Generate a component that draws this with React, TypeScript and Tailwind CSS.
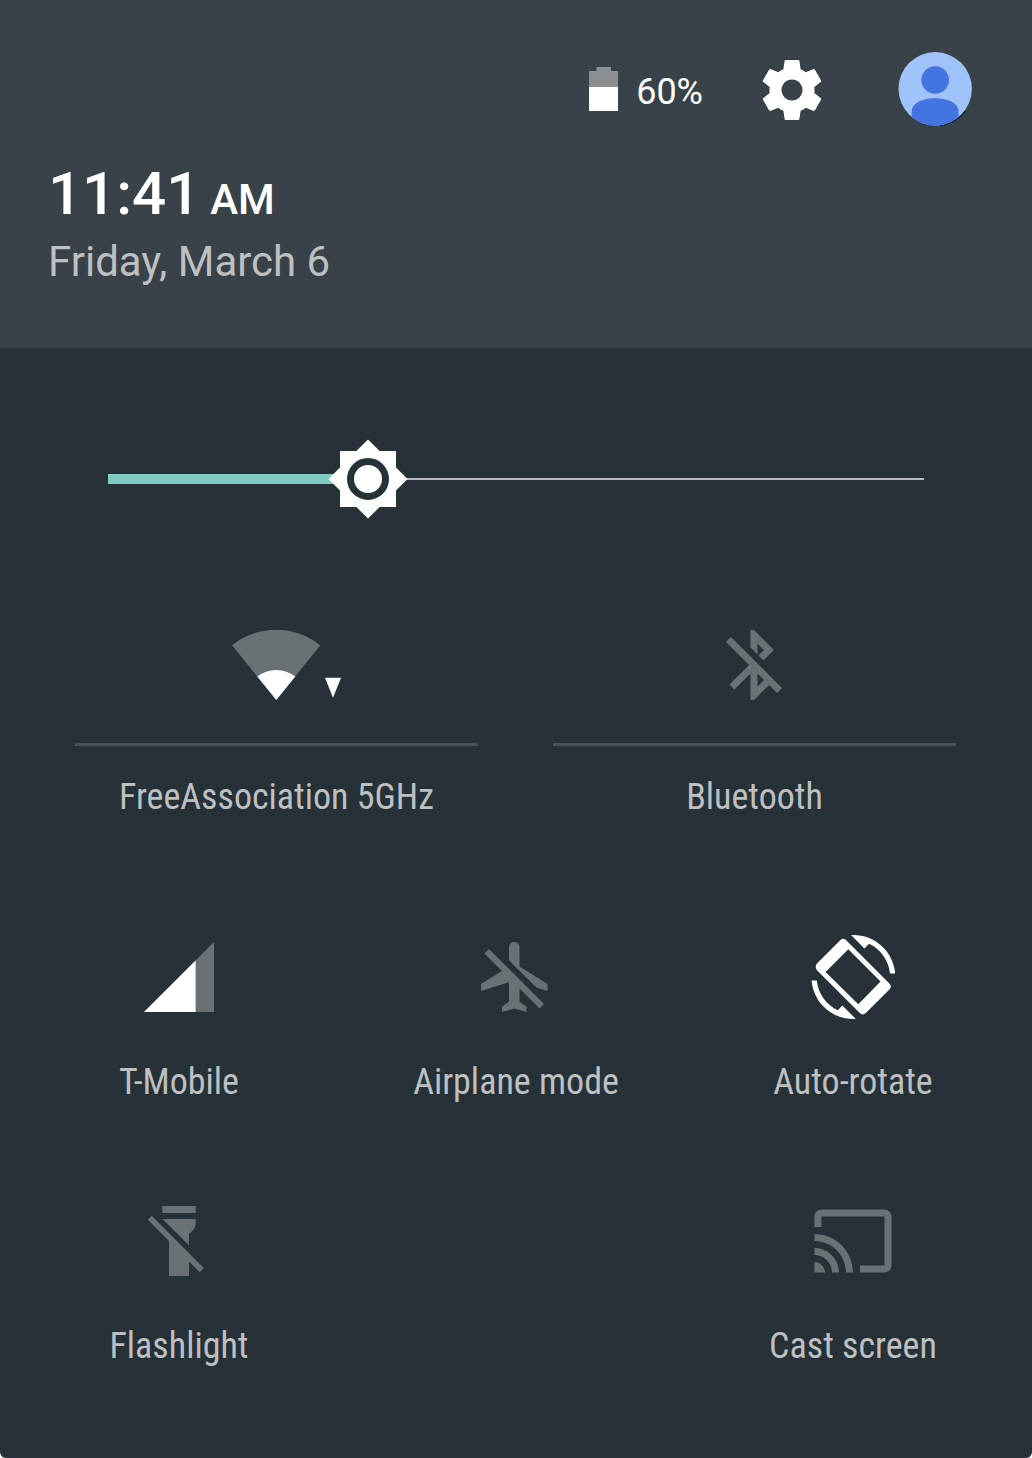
import type { ReactNode } from "react";

const AIRPLANE =
  "M13 9V3.5c0-.83-.67-1.5-1.5-1.5S10 2.67 10 3.5v3.68l7.83 7.83L21 16v-2l-8-5zM3 5.27l4.99 4.99L2 14v2l8-2.5V19l-2 1.5V22l3.5-1 3.5 1v-1.5L13 19v-3.73L18.73 21 20 19.73 4.27 4 3 5.27z";
const BLUETOOTH =
  "M13 5.83l1.88 1.88-1.6 1.6 1.41 1.41 3.02-3.02L12 2h-1v5.03l2 2v-3.2zM5.41 4L4 5.41 10.59 12 5 17.59 6.41 19 11 14.41V22h1l4.29-4.29 2.3 2.29L20 18.59 5.41 4zM13 18.17v-3.76l1.88 1.88L13 18.17z";
const CAST =
  "M21 3H3c-1.1 0-2 .9-2 2v3h2V5h18v14h-7v2h7c1.1 0 2-.9 2-2V5c0-1.1-.9-2-2-2zM1 18v3h3c0-1.66-1.34-3-3-3zm0-4v2c2.76 0 5 2.24 5 5h2c0-3.87-3.13-7-7-7zm0-4v2c4.97 0 9 4.03 9 9h2c0-6.08-4.93-11-11-11z";
const ROTATE_ARROWS =
  "M16.48 2.52c3.27 1.55 5.61 4.72 5.97 8.48h1.5C23.44 4.84 18.29 0 12 0l-.66.03 3.81 3.81 1.33-1.32zM7.52 21.48C4.25 19.94 1.91 16.76 1.55 13H.05C.56 19.16 5.71 24 12 24l.66-.03-3.81-3.81-1.33 1.32z";
const GEAR =
  "M19.43 12.98c.04-.32.07-.64.07-.98s-.03-.66-.07-.98l2.11-1.65c.19-.15.24-.42.12-.64l-2-3.46c-.12-.22-.39-.3-.61-.22l-2.49 1c-.52-.4-1.08-.73-1.69-.98l-.38-2.65C14.46 2.18 14.25 2 14 2h-4c-.25 0-.46.18-.49.42l-.38 2.65c-.61.25-1.17.59-1.69.98l-2.49-1c-.23-.09-.49 0-.61.22l-2 3.46c-.13.22-.07.49.12.64l2.11 1.65c-.04.32-.07.65-.07.98s.03.66.07.98l-2.11 1.65c-.19.15-.24.42-.12.64l2 3.46c.12.22.39.3.61.22l2.49-1c.52.4 1.08.73 1.69.98l.38 2.65c.03.24.24.42.49.42h4c.25 0 .46-.18.49-.42l.38-2.65c.61-.25 1.17-.59 1.69-.98l2.49 1c.23.09.49 0 .61-.22l2-3.46c.12-.22.07-.49-.12-.64l-2.11-1.65zM12 15.5c-1.93 0-3.5-1.57-3.5-3.5s1.57-3.5 3.5-3.5 3.5 1.57 3.5 3.5-1.57 3.5-3.5 3.5z";

function MaterialIcon({ d }: { d: string }) {
  return (
    <svg viewBox="0 0 24 24" className="size-[84px] fill-[#697174]">
      <path d={d} />
    </svg>
  );
}

function WifiIcon() {
  return (
    <svg viewBox="0 0 132 84" className="h-[84px] w-[132px]">
      <path d="M66.3 77L22 22.3A70.3 70.3 0 0 1 110.3 22.3Z" className="fill-[#697174]" />
      <path d="M66.3 77L47.3 53.6A30.3 30.3 0 0 1 85.3 53.6Z" className="fill-white" />
      <path d="M115 54.7H131L123 74.8Z" className="fill-white" />
    </svg>
  );
}

function SignalIcon() {
  return (
    <svg viewBox="0 0 84 84" className="size-[84px]">
      <path d="M7 77L77 7V77Z" className="fill-[#697174]" />
      <path d="M7 77L58.6 25.4V77Z" className="fill-white" />
    </svg>
  );
}

function RotateIcon() {
  return (
    <svg viewBox="0 0 84 84" className="size-[84px] fill-white">
      <path transform="translate(.4 0) scale(3.5)" d={ROTATE_ARROWS} />
      <path
        fillRule="evenodd"
        d="M29.2 5.2Q32.2 2.4 35.2 5.2L78.4 48.4Q81.2 51.4 78.4 54.4L54.8 78Q51.8 80.8 48.8 78L6 35.2Q3.4 32 6 28.4ZM37.3 14.3L14.6 37L47.3 69.2L69.5 46.5Z"
      />
    </svg>
  );
}

function FlashlightIcon() {
  return (
    <svg viewBox="0 0 84 84" className="size-[84px] fill-[#697174]">
      <path d="M25.3 7H58.8V14H25.3ZM25.5 20H58.8V23.5C58.8 28 56 32.5 52 34.5V46.2ZM14.7 16.7L10.8 20.7L32 42V77H52V62.5L62.7 73.2L66.8 69.1Z" />
    </svg>
  );
}

function BrightnessThumb() {
  return (
    <svg viewBox="0 0 80 80" className="absolute left-[220px] top-1/2 size-20 -translate-y-1/2">
      <path d="M12 12H28.4L40 .5L51.6 12H68V28.4L79.5 40L68 51.6V68H51.6L40 79.5L28.4 68H12V51.6L.5 40L12 28.4Z" className="fill-white" />
      <circle cx="40" cy="40" r="17.5" strokeWidth="7" className="fill-white stroke-[#263238]" />
    </svg>
  );
}

function Avatar() {
  return (
    <svg viewBox="0 0 74 74" className="size-[74px]">
      <clipPath id="avatar-clip">
        <circle cx="37.2" cy="36.8" r="36.7" />
      </clipPath>
      <path d="M67 59A37 37 0 0 1 42 73.4" fill="none" className="stroke-[#14181c]" strokeWidth="1.4" />
      <g clipPath="url(#avatar-clip)">
        <rect width="74" height="74" className="fill-[#a1c3fb]" />
        <circle cx="37.2" cy="28" r="13.8" className="fill-[#4374e0]" />
        <path d="M13.7 74V60C13.7 51 24 46.2 37.2 46.2S60.6 51 60.6 60V74Z" className="fill-[#4374e0]" />
      </g>
    </svg>
  );
}

function Label({ children }: { children: ReactNode }) {
  return (
    <span className="whitespace-nowrap text-[36px] leading-[42px] text-[#bdbfc1] [font-family:'Roboto_Condensed',Roboto,sans-serif] [font-stretch:75%]">
      {children}
    </span>
  );
}

function Tile({ icon, label }: { icon?: ReactNode; label?: string }) {
  return (
    <div className="flex w-[337px] flex-col items-center gap-[42px]">
      {icon}
      {label && <Label>{label}</Label>}
    </div>
  );
}

function WideTile({ icon, label }: { icon: ReactNode; label: string }) {
  return (
    <div className="flex w-[403px] flex-col items-center">
      <div className="pr-[2px]">{icon}</div>
      <div className="mt-9 h-[3px] w-full bg-[#475358]" />
      <div className="mt-[30px] flex">
        <Label>{label}</Label>
      </div>
    </div>
  );
}

export default function App() {
  return (
    <div className="h-[1458px] w-[1032px] bg-white font-[Roboto,sans-serif]">
      <div className="flex h-full flex-col overflow-hidden rounded-b-[6px] bg-[#263238]">
        <header className="h-[348px] bg-[#394249] pt-[51px] text-white">
          <div className="flex h-[76px] items-center justify-end pr-[60px]">
            <svg viewBox="0 0 29 44" className="mr-[18px] h-11 w-[29px]">
              <path d="M7.5 0H22V4H29V20H0V4H7.5Z" className="fill-[#8b8f92]" />
              <path d="M0 20H29V44H0Z" className="fill-white" />
            </svg>
            <span className="mr-[53px] mt-1.5 text-[36px] leading-[42px]">60%</span>
            <svg viewBox="0 0 24 24" className="mt-0.5 size-[72px] fill-white">
              <path d={GEAR} />
            </svg>
            <div className="relative ml-[70px] size-[74px]">
              <div className="absolute -left-[62px] top-[5px] size-[74px] rounded-full border border-dotted border-[#3a4855]" />
              <div className="absolute inset-0">
                <Avatar />
              </div>
            </div>
          </div>
          <div className="mt-8 flex items-baseline gap-[10px] pl-[48px] font-medium leading-[70px]">
            <span className="text-[60px]">11:41</span>
            <span className="text-[42px]">AM</span>
          </div>
          <div className="mt-[2px] pl-[48px] text-[42px] leading-[49px] text-[#bdbfc1]">Friday, March 6</div>
        </header>

        <div className="relative mx-[108px] mt-[91px] flex h-20 items-center">
          <div className="h-[10px] w-[260px] bg-[#80cbc4]" />
          <div className="h-0.5 flex-1 bg-[#b8bbbd]" />
          <BrightnessThumb />
        </div>

        <div className="mt-[104px] flex gap-[75px] pl-[75px]">
          <WideTile icon={<WifiIcon />} label="FreeAssociation 5GHz" />
          <WideTile icon={<MaterialIcon d={BLUETOOTH} />} label="Bluetooth" />
        </div>

        <div className="mt-[117px] flex pl-[10.5px]">
          <Tile icon={<SignalIcon />} label="T-Mobile" />
          <Tile icon={<MaterialIcon d={AIRPLANE} />} label="Airplane mode" />
          <Tile icon={<RotateIcon />} label="Auto-rotate" />
        </div>

        <div className="mt-24 flex pl-[10.5px]">
          <Tile icon={<FlashlightIcon />} label="Flashlight" />
          <Tile />
          <Tile icon={<MaterialIcon d={CAST} />} label="Cast screen" />
        </div>
      </div>
    </div>
  );
}
